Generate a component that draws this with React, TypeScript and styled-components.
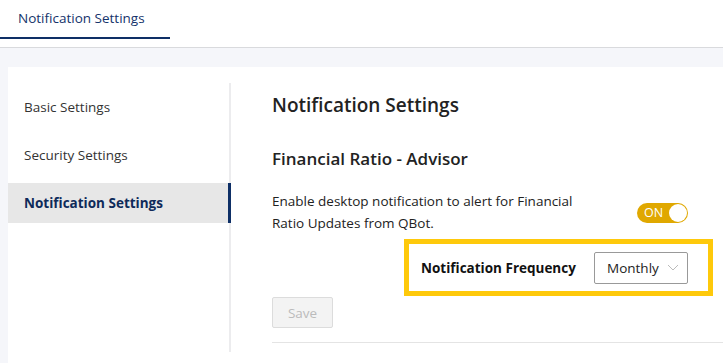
import React from "react";
import styled, { createGlobalStyle } from "styled-components";

const Global = createGlobalStyle`
  html, body { margin: 0; padding: 0; }
  body {
    font-family: "Segoe UI", "Open Sans", "Noto Sans", sans-serif;
    background: #f5f6fa;
    color: #222;
    overflow: hidden;
  }
  * { box-sizing: border-box; }
`;

const Page = styled.div`
  width: 723px;
  height: 363px;
  display: flex;
  flex-direction: column;
  overflow: hidden;
`;

const TabBar = styled.div`
  height: 48px;
  background: #fff;
  border-bottom: 1px solid #d9dadd;
  display: flex;
  align-items: flex-start;
`;

const Tab = styled.div<{ $active?: boolean }>`
  width: 170px;
  height: 39px;
  padding: 9px 0 0 18px;
  font-size: 13.5px;
  color: #14336b;
  border-bottom: 2px solid ${(p) => (p.$active ? "#0e2f66" : "transparent")};
`;

const Body = styled.div`
  flex: 1;
  padding: 19px 0 0 8px;
  display: flex;
`;

const Card = styled.div`
  flex: 1;
  background: #fff;
  display: flex;
  padding-top: 16px;
`;

const Sidebar = styled.nav`
  width: 223px;
  border-right: 2px solid #ececee;
  padding-top: 4px;
  display: flex;
  flex-direction: column;
  gap: 8px;
  height: 269px;
`;

const NavItem = styled.div<{ $active?: boolean }>`
  height: 40px;
  display: flex;
  align-items: center;
  padding-left: 16px;
  font-size: 13.5px;
  color: ${(p) => (p.$active ? "#0e2a5a" : "#333")};
  font-weight: ${(p) => (p.$active ? 700 : 400)};
  background: ${(p) => (p.$active ? "#e7e7e7" : "transparent")};
  border-right: 3px solid ${(p) => (p.$active ? "#0e2f66" : "transparent")};
  margin-right: -2px;
`;

const Content = styled.div`
  flex: 1;
  padding: 0 0 0 41px;
  display: flex;
  flex-direction: column;
`;

const Heading = styled.h1`
  margin: 10px 0 0;
  font-size: 19px;
  font-weight: 600;
  line-height: 24px;
  color: #222;
`;

const SubHeading = styled.h2`
  margin: 31px 0 0;
  font-size: 17px;
  font-weight: 600;
  line-height: 22px;
  color: #222;
`;

const OptionRow = styled.div`
  margin-top: 20px;
  padding-right: 35px;
  display: flex;
  align-items: center;
  justify-content: space-between;
`;

const Description = styled.p`
  margin: 0;
  width: 330px;
  font-size: 13.5px;
  line-height: 22px;
  color: #222;
`;

const Toggle = styled.div`
  width: 51px;
  height: 20px;
  border-radius: 10px;
  background: #e0a800;
  display: flex;
  align-items: center;
  justify-content: space-between;
  padding: 0 1px 0 7px;
  color: #fff;
  font-size: 12.5px;
  margin-top: 1px;
`;

const Knob = styled.span`
  width: 18px;
  height: 18px;
  border-radius: 50%;
  background: #fff;
`;

const FrequencyRow = styled.div`
  margin-top: 5px;
  margin-right: 10px;
  align-self: flex-end;
  width: 309px;
  height: 57px;
  border: 5px solid #fec90b;
  display: flex;
  align-items: center;
  padding: 0 20px 0 12px;
  justify-content: space-between;
`;

const FreqLabel = styled.span`
  font-size: 13.5px;
  font-weight: 700;
  color: #111;
`;

const Select = styled.div`
  width: 94px;
  height: 32px;
  border: 1px solid #999;
  border-radius: 2px;
  display: flex;
  align-items: center;
  padding: 0 0 0 12px;
  gap: 8px;
  font-size: 13.5px;
  color: #222;
`;

const SaveButton = styled.button`
  margin-top: 1px;
  width: 61px;
  height: 31px;
  border: 1px solid #dcdcdc;
  background: #f3f3f3;
  border-radius: 2px;
  color: #bbb;
  font-family: inherit;
  font-size: 13.5px;
  padding: 0;
`;

const Rule = styled.hr`
  margin: 14px 0 0;
  border: 0;
  border-top: 1px solid #e4e4e4;
`;

export default function App() {
  return (
    <Page>
      <Global />
      <TabBar>
        <Tab $active>Notification Settings</Tab>
      </TabBar>
      <Body>
        <Card>
          <Sidebar>
            <NavItem>Basic Settings</NavItem>
            <NavItem>Security Settings</NavItem>
            <NavItem $active>Notification Settings</NavItem>
          </Sidebar>
          <Content>
            <Heading>Notification Settings</Heading>
            <SubHeading>Financial Ratio - Advisor</SubHeading>
            <OptionRow>
              <Description>
                Enable desktop notification to alert for Financial Ratio Updates from QBot.
              </Description>
              <Toggle>
                ON
                <Knob />
              </Toggle>
            </OptionRow>
            <FrequencyRow>
              <FreqLabel>Notification Frequency</FreqLabel>
              <Select>
                Monthly
                <svg width="12" height="8" viewBox="0 0 12 8">
                  <path d="M1 1l5 5 5-5" fill="none" stroke="#bbb" strokeWidth="1" />
                </svg>
              </Select>
            </FrequencyRow>
            <div>
              <SaveButton disabled>Save</SaveButton>
            </div>
            <Rule />
          </Content>
        </Card>
      </Body>
    </Page>
  );
}
